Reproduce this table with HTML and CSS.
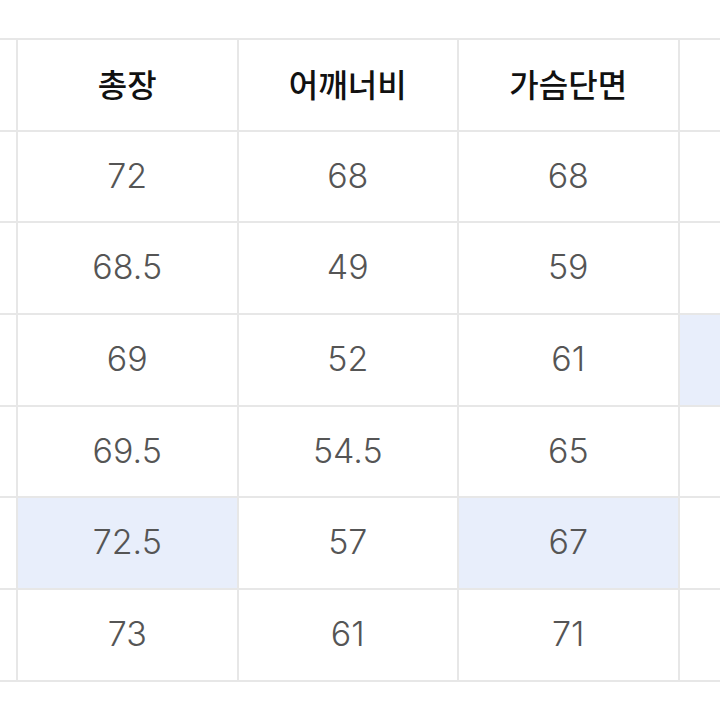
FILE: index.html
```html
<!DOCTYPE html>
<html lang="ko">
<head>
<meta charset="utf-8">
<title>사이즈표</title>
<link rel="stylesheet" href="styles.css">
</head>
<body>
<div class="wrap">
  <div class="grid">
    <div class="cell"></div>
    <div class="cell head">총장</div>
    <div class="cell head">어깨너비</div>
    <div class="cell head">가슴단면</div>
    <div class="cell"></div>

    <div class="cell"></div>
    <div class="cell num">72</div>
    <div class="cell num">68</div>
    <div class="cell num">68</div>
    <div class="cell"></div>

    <div class="cell"></div>
    <div class="cell num">68.5</div>
    <div class="cell num">49</div>
    <div class="cell num">59</div>
    <div class="cell"></div>

    <div class="cell"></div>
    <div class="cell num">69</div>
    <div class="cell num">52</div>
    <div class="cell num">61</div>
    <div class="cell hl"></div>

    <div class="cell"></div>
    <div class="cell num">69.5</div>
    <div class="cell num">54.5</div>
    <div class="cell num">65</div>
    <div class="cell"></div>

    <div class="cell"></div>
    <div class="cell num hl">72.5</div>
    <div class="cell num">57</div>
    <div class="cell num hl">67</div>
    <div class="cell"></div>

    <div class="cell"></div>
    <div class="cell num">73</div>
    <div class="cell num">61</div>
    <div class="cell num">71</div>
    <div class="cell"></div>
  </div>
</div>
</body>
</html>
```
FILE: styles.css
```css
html, body {
  margin: 0;
  padding: 0;
  background: #ffffff;
}
body {
  width: 720px;
  height: 720px;
  overflow: hidden;
  font-family: "Inter", "Noto Sans CJK KR", sans-serif;
}
.wrap {
  width: 720px;
  height: 720px;
  overflow: hidden;
  padding-top: 38px;
  box-sizing: border-box;
}
.grid {
  display: grid;
  grid-template-columns: repeat(5, 218.5px);
  grid-auto-rows: 89.7px;
  gap: 2px;
  padding: 2px 0;
  background: #e7e7e7;
  margin-left: -202.5px;
  width: max-content;
}
.cell {
  background: #ffffff;
  display: flex;
  align-items: center;
  justify-content: center;
}
.cell.hl {
  background: #e8eefb;
}
.head {
  font-family: "Noto Sans CJK KR", sans-serif;
  font-size: 32px;
  font-weight: 500;
  color: #111111;
  padding-bottom: 4px;
}
.num {
  font-size: 34px;
  font-weight: 300;
  color: #555555;
  padding-bottom: 3px;
}
```
